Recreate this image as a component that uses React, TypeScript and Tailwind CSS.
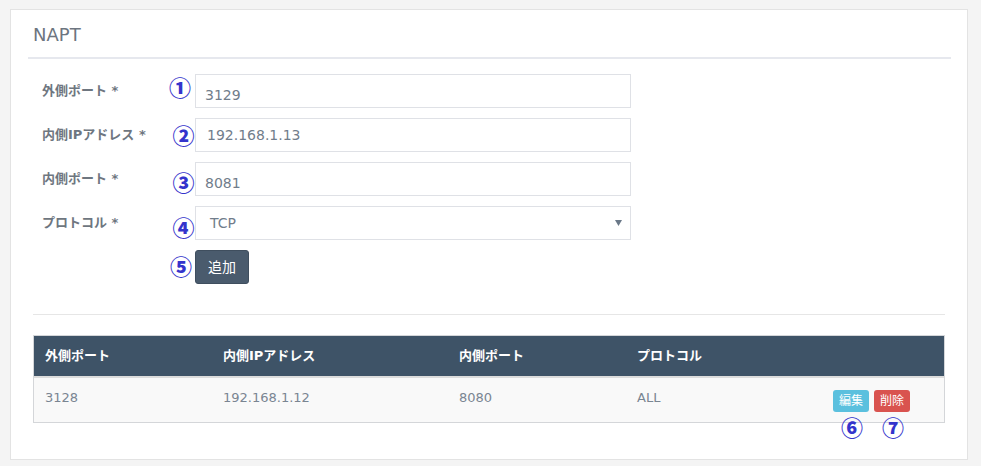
import React from "react";

const font = { fontFamily: '"DejaVu Sans", "Noto Sans CJK JP", sans-serif' };

function Circ({ n, className = "" }: { n: string; className?: string }) {
  return (
    <span
      className={`text-[#3434cc] text-[22px] leading-none font-black ${className}`}
      style={{ fontFamily: '"Noto Sans CJK JP", sans-serif' }}
    >
      {n}
    </span>
  );
}

function Row({
  label,
  n,
  children,
  circClass = "",
}: {
  label: string;
  n: string;
  children: React.ReactNode;
  circClass?: string;
}) {
  return (
    <div className="flex items-center h-[34px]">
      <div className="w-[125px] text-[13px] font-bold text-[#6e7680]">{label}</div>
      <div className="w-[28px] flex justify-center">
        <Circ n={n} className={circClass} />
      </div>
      {children}
    </div>
  );
}

export default function App() {
  return (
    <div className="min-h-[466px] w-[981px] bg-[#f4f4f4] pt-[9px] pl-[10px]" style={font}>
      <div className="w-[958px] h-[451px] bg-white border border-[#e3e3e3]">
        <div className="mx-[17px] mr-[16px] h-[49px] border-b-2 border-[#e6e8ee] flex items-center pl-[5px]">
          <span className="text-[18px] text-[#6d7580] mt-[1px]">NAPT</span>
        </div>
        <div className="pl-[31px] mt-[15px] flex flex-col gap-[10px]">
          <Row label="外側ポート *" n="①" circClass="-mt-[10px] -ml-[2px]">
            <div className="w-[436px] h-[34px] border border-[#dfe1e6] flex items-center pl-[9px] pt-[9px] text-[14px] text-[#717d8b]">
              3129
            </div>
          </Row>
          <Row label="内側IPアドレス *" n="②" circClass="ml-[5px] -mt-[3px]">
            <div className="w-[436px] h-[34px] border border-[#dfe1e6] flex items-center pl-[11px] text-[14px] text-[#717d8b]">
              192.168.1.13
            </div>
          </Row>
          <Row label="内側ポート *" n="③" circClass="ml-[5px] mt-[4px]">
            <div className="w-[436px] h-[34px] border border-[#dfe1e6] flex items-center pl-[9px] pt-[8px] text-[14px] text-[#717d8b]">
              8081
            </div>
          </Row>
          <Row label="プロトコル *" n="④" circClass="ml-[5px] mt-[6px]">
            <div className="w-[436px] h-[34px] border border-[#dfe1e6] flex items-center justify-between pl-[14px] pr-[8px] text-[14px] text-[#717d8b]">
              <span>TCP</span>
              <svg width="7" height="6" viewBox="0 0 7 6">
                <path d="M0 0 H7 L3.5 6 Z" fill="#6a7888" />
              </svg>
            </div>
          </Row>
          <div className="flex items-center h-[34px]">
            <div className="w-[125px]" />
            <div className="w-[28px] flex justify-center">
              <Circ n="⑤" className="-mt-[4px]" />
            </div>
            <button className="h-[34px] w-[54px] rounded-[3px] bg-[#4a5b6d] border border-[#3f4e5e] text-white text-[14px] flex items-center justify-center">
              追加
            </button>
          </div>
        </div>
        <div className="mx-[22px] mt-[30px] border-t border-[#e6e6e6]" />
        <div className="mx-[22px] mt-[20px] border border-[#d4d6d9]">
          <div className="h-[40px] bg-[#3e5367] flex items-center text-white text-[13px] font-bold border-b-2 border-[#dcdcdc] box-content">
            <div className="w-[178px] pl-[11px]">外側ポート</div>
            <div className="w-[236px] pl-[11px]">内側IPアドレス</div>
            <div className="w-[178px] pl-[11px]">内側ポート</div>
            <div className="pl-[11px]">プロトコル</div>
          </div>
          <div className="h-[44px] bg-[#f9f9f9] flex items-center text-[13px] text-[#7a8592]">
            <div className="w-[178px] pl-[11px] -mt-[4px]">3128</div>
            <div className="w-[236px] pl-[11px] -mt-[4px]">192.168.1.12</div>
            <div className="w-[178px] pl-[11px] -mt-[4px]">8080</div>
            <div className="w-[207px] pl-[11px] -mt-[4px]">ALL</div>
            <div className="flex gap-[5px] mt-[1px]">
              <div className="relative">
                <button className="h-[22px] w-[36px] rounded-[3px] bg-[#5bc0de] text-white text-[12px] flex items-center justify-center">
                  編集
                </button>
                <Circ n="⑥" className="absolute left-[8px] top-[25px]" />
              </div>
              <div className="relative">
                <button className="h-[22px] w-[36px] rounded-[3px] bg-[#d9534f] text-white text-[12px] flex items-center justify-center">
                  削除
                </button>
                <Circ n="⑦" className="absolute left-[8px] top-[25px]" />
              </div>
            </div>
          </div>
        </div>
      </div>
    </div>
  );
}
